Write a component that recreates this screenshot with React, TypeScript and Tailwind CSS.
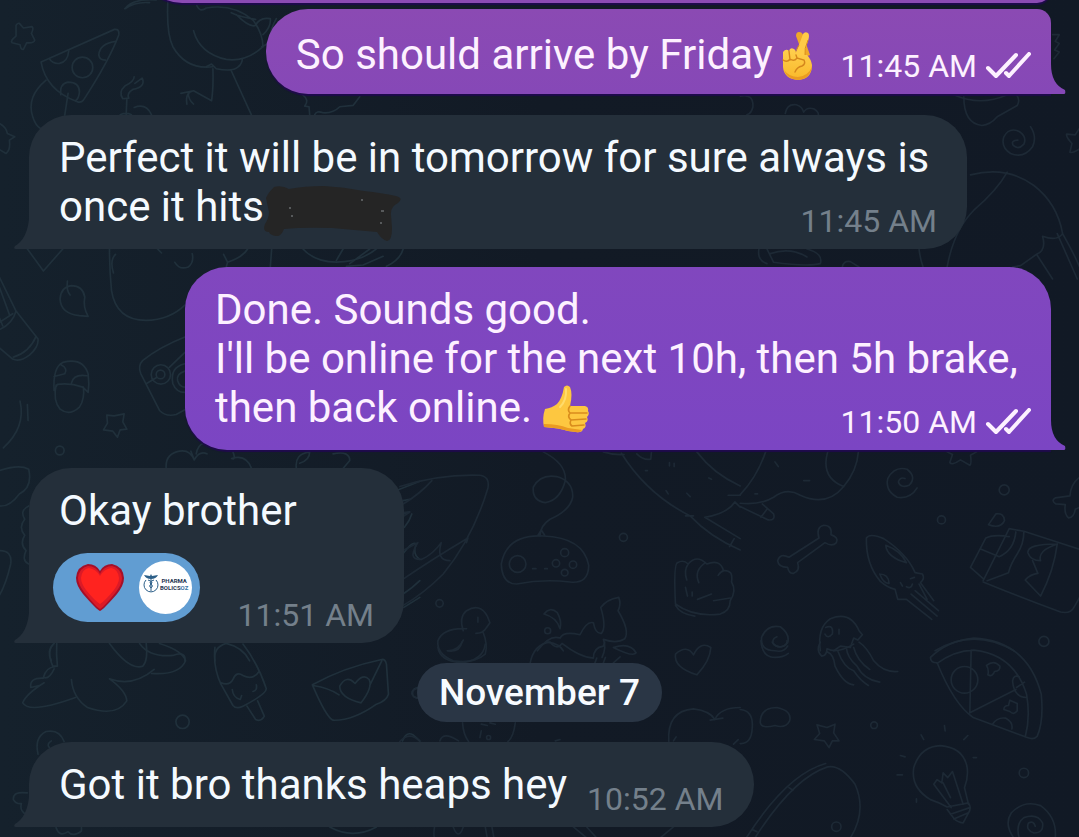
import type { ReactNode } from 'react';
import clsx from 'clsx';

/* ── Wallpaper doodles, drawn at 3x and scaled down ── */
const doodles: { x: number; y: number; soft?: boolean; d: string[] }[] = [
  {
    x: 0,
    y: 0,
    d: [
      // star
      'M60 70 L72 84 L98 80 Q104 84 96 100 L106 120 Q104 130 82 128 L72 148 Q64 150 62 134 L38 128 Q32 122 50 108 L50 76 Q54 68 60 70Z',
      // pizza
      'M125 186 L345 88 Q360 86 358 104 Q330 180 252 300 Q244 310 232 304 Q140 270 125 186Z',
      'M150 176 Q160 192 180 190 Q205 186 208 152 M350 124 Q300 130 298 165 Q300 180 318 180 M218 202a31 31 0 1 0 62 0a31 31 0 1 0 -62 0',
      'M184 284 Q180 250 206 246 Q240 246 240 276 Q238 296 228 302 M140 240 Q80 290 100 350 Q108 376 124 386 M206 280 L196 345',
      // ostrich
      'M376 26 Q400 -5 470 0 M376 26 Q410 4 450 8 M505 0 Q500 100 520 140 Q560 210 640 200 M582 92 Q600 160 680 178 Q740 186 790 140',
      'M590 12 Q600 40 620 24 Q700 10 760 60 Q790 100 790 140 M695 38 Q720 50 768 58 M710 44 Q750 84 768 76 Q780 50 812 56 Q815 80 790 104 M830 56 Q810 90 812 120 Q812 130 786 140',
      'M620 200 L636 192 L650 206 Q700 216 716 200 Q728 190 728 176 M640 206 Q642 260 636 302 L582 272 M582 272 L544 280 M582 272 Q556 276 562 312 M566 276 Q566 300 582 312 M695 212 L756 346',
      // flame
      'M404 230 Q404 244 376 258 Q356 276 370 296 L388 294 Q380 280 400 268 Q440 260 428 234 L406 250 M382 298 L380 344 M362 344 Q380 336 396 344 M404 322 Q440 308 456 344',
      'M0 370 Q20 380 24 400 L46 410 L30 420 Q34 450 20 460 L0 448',
      'M910 285 Q930 300 915 318 L928 320 L930 344 M945 344 Q950 330 970 338 Q1000 340 1020 320 L1060 316 L1080 290',
    ],
  },
  {
    x: 740,
    y: 0,
    soft: true,
    d: [
      'M0 288 Q40 280 38 320 Q34 340 20 344 M135 340 Q140 310 168 314 Q186 320 190 336 Q200 320 220 326 Q236 336 234 344',
      'M640 284 Q720 320 800 284 M670 290 Q670 370 724 376 Q750 374 770 350 L830 316 Q840 300 828 284',
      // spiral
      'M870 380 Q890 410 876 440 Q850 476 810 460 Q780 440 790 410 Q806 380 836 394 Q860 410 850 432 Q834 450 818 436 Q810 420 832 420',
      'M1017 384 L1004 404 L978 402 Q976 410 994 430 L988 456 Q996 460 1017 446',
      'M936 104 L956 104 L944 124 L956 130 L942 150 L956 156 L940 176',
      // umbrella
      'M690 524 Q800 496 880 556 Q950 610 966 700 M800 516 Q770 570 700 630 Q640 690 620 800 M536 748 Q540 780 548 800 M906 708 Q950 724 966 700 Q1000 760 1017 800 M906 708 Q918 750 888 762 L840 796 L816 800 M888 762 L936 836 M950 700 L1010 836',
      'M56 746 Q50 780 80 790 M80 746 L100 786 Q200 800 240 790 Q250 760 200 746 M90 760 Q150 740 200 770 M306 800 Q310 780 330 784 L356 800',
    ],
  },
  {
    x: 0,
    y: 240,
    d: [
      'M84 26 L132 92 L190 26 M330 26 Q330 90 336 150 Q350 240 440 240 Q510 238 556 194 M348 42 Q330 60 342 98 M526 66 Q540 90 566 80 Q584 66 578 40 M474 26 L486 38 M672 42 L684 66 L680 80 M684 66 Q730 50 744 26 M816 26 L812 80 M910 26 Q960 80 1060 60 M1030 26 L1010 60',
      'M1060 60 Q1100 50 1130 26 M1040 78 L1090 74 L1150 48 M1110 26 L1050 70 M1160 78 Q1200 60 1210 26',
      // leaf
      'M204 122 Q200 150 212 164 M216 136 Q184 140 182 176 Q184 220 240 226 L266 228 Q250 200 256 170 Q250 136 216 136Z',
      // pencil
      'M0 110 L50 212 L116 296 Q118 320 90 344 Q60 366 40 356 L0 322 M50 212 Q40 250 0 268 M40 220 L0 246 M0 140 L30 222 M110 288 Q90 336 42 350 M0 232 L10 256',
      // acorn
      'M164 450 Q160 380 190 366 Q250 350 266 400 Q270 430 266 456 M164 450 L174 432 Q210 426 250 440 L266 456 M170 434 Q160 480 182 506 Q210 528 240 500 Q256 476 252 440 M186 374 Q206 384 196 400 L164 408 M216 428 Q222 400 262 406',
      // star
      'M322 524 L344 526 L374 520 L370 544 L382 566 L362 568 L354 590 L340 572 L312 568 L324 548Z',
      // camera
      'M556 290 Q480 320 430 360 Q414 376 424 400 L480 510 Q500 530 530 522 L556 508 M455 402a29 29 0 1 0 58 0a29 29 0 1 0 -58 0 M470 402a13 13 0 1 0 26 0a13 13 0 1 0 -26 0 M556 370 Q510 380 520 430 Q530 456 556 456 M556 392 Q530 400 534 420 Q540 440 556 440 M440 430 L470 412 M510 380 L556 336',
      'M62 482 Q80 560 12 622 M84 492 L86 540 M168 630a13 13 0 1 0 26 0a13 13 0 1 0 -26 0',
      // apple
      'M500 684 Q496 640 540 632 Q570 626 584 658 M574 632 L584 658 Q600 630 622 640 M590 640 Q594 614 612 608 M700 634 Q710 660 696 654 Q740 640 756 684 M890 684 Q884 640 930 634 Q930 660 900 668 M1000 640 Q1050 630 1050 660 L1030 684',
      'M0 690 Q60 670 88 686 Q100 740 60 760 Q30 800 0 796',
    ],
  },
  {
    x: 0,
    y: 460,
    d: [
      'M88 136 Q60 150 76 176 Q56 200 76 224 Q60 250 80 270 Q66 300 88 310 M0 270 Q40 270 34 310 Q20 370 0 404',
      'M1190 90 L1260 62 M1210 120 L1230 116 M1212 160 L1228 154 M1214 200 Q1230 180 1236 160 M1212 276 Q1240 240 1250 250 Q1236 280 1260 296 M1210 400 Q1240 380 1260 360 M1212 440 L1260 410',
      'M164 548 Q140 570 156 600 M420 548 Q450 590 520 584 Q560 570 556 600 M646 600 Q640 560 680 548 Q730 560 750 600',
    ],
  },
  {
    x: 400,
    y: 450,
    soft: true,
    d: [
      // guitar head
      'M0 108 Q120 70 240 74 Q270 78 264 112 Q220 260 130 370 Q70 430 10 464 M10 160 Q60 130 96 90 M10 186 L30 184 L12 196 M12 298 L54 276 Q20 330 66 326 Q100 310 124 276 Q108 330 150 330 M12 384 Q90 330 204 262 L200 276',
      // gamepad
      'M430 4 Q500 40 496 90 Q480 150 436 156 Q396 150 400 110 Q420 70 470 78 Q520 92 518 140 Q510 180 450 206 Q420 226 420 256 M414 254 L424 238 L434 254',
      'M430 256 Q320 250 304 340 Q306 400 350 400 Q430 384 510 394 Q566 400 566 344 Q550 260 430 256Z M328 340a25 25 0 1 0 50 0a25 25 0 1 0 -50 0',
      'M482 306a12 12 0 1 0 24 0a12 12 0 1 0 -24 0 M457 338a11 11 0 1 0 22 0a11 11 0 1 0 -22 0 M508 342a11 11 0 1 0 22 0a11 11 0 1 0 -22 0 M484 366a10 10 0 1 0 20 0a10 10 0 1 0 -20 0 M398 354h10 M434 354h8',
      'M658 260a12 12 0 1 0 24 0a12 12 0 1 0 -24 0 M108 458a11 11 0 1 0 22 0a11 11 0 1 0 -22 0',
      // duck
      'M190 540 Q176 500 200 480 Q240 456 262 496 L270 516 L260 530 Q250 548 228 548 M250 546 Q264 580 256 610 Q220 640 160 630 Q110 610 114 570 Q130 530 200 534 M190 568 Q176 600 144 600 M234 500v14',
      // splash
      'M432 490 Q450 466 472 486 Q486 510 480 534 Q470 500 432 490Z M434 540a9 9 0 1 0 18 0a9 9 0 1 0 -18 0 M412 600 Q450 550 480 562 Q490 540 540 552 Q560 510 580 516 Q586 550 604 548 Q620 530 602 470 Q620 446 656 440 Q664 460 654 480 Q690 540 674 564 Q650 580 610 566 Q620 590 606 620 M444 574 Q480 580 490 600',
      // muffin
      'M826 460 Q820 340 832 336 Q850 326 864 340 Q890 310 920 340 Q960 324 970 360 Q1000 356 994 394 Q1010 420 990 450 Q990 480 960 490 Q880 500 826 460Z M864 340 Q850 360 860 388 M916 336 Q880 360 896 396 M954 374 Q970 350 990 366 M856 410 L862 436 M876 424v12 M892 446 L934 430 M940 450 L990 442 M826 464 Q840 490 884 496',
      // whale
      'M664 8 Q740 130 870 196 Q930 260 1020 298 M610 4 Q640 14 672 12 M710 10 Q730 30 752 26 L754 4 M890 4 Q940 70 1020 106 M914 200 Q980 190 1004 154 L1020 170 M914 200 L1020 264 M984 134h36 M856 196h24 M1002 264 L988 288 M736 60h6 M808 36v10 M822 38v10 M926 82l8 4 M860 128l10 10 M798 120l6 10',
    ],
  },
  {
    x: 740,
    y: 450,
    soft: true,
    d: [
      'M76 4 Q50 80 0 132 M0 158 Q60 164 100 140 Q140 110 180 134 Q260 170 310 108 Q350 60 354 4 M262 4 Q240 80 310 108 M0 168 L84 208 Q106 210 100 190 L66 160 M62 200 L80 176 M104 34 L114 48 M190 90h18 M44 130h8',
      // spiral
      'M530 112 Q510 146 470 140 Q434 120 442 84 Q462 46 500 56 Q530 80 506 104 Q480 114 474 94 Q478 78 494 84',
      'M620 4 L636 12 L628 36 Q634 46 660 28 L688 44 Q694 40 690 14 L708 4',
      'M776 118a15 15 0 1 0 30 0a15 15 0 1 0 -30 0 M591 208a12 12 0 1 0 24 0a12 12 0 1 0 -24 0',
      'M1017 80 Q990 100 988 136 L944 142 Q930 150 946 160 L974 162 Q970 190 984 202 Q1000 200 1004 176 L1017 170',
      // bone
      'M236 262 Q226 230 250 224 Q276 224 272 252 Q296 260 288 276 Q276 290 254 276 L172 336 Q180 360 160 368 Q146 370 142 350 Q114 350 112 330 Q120 306 146 320Z',
      // rocket
      'M378 262 Q388 246 430 264 Q500 310 524 366 L546 370 Q554 384 540 396 L580 450 M378 262 Q376 340 420 392 Q440 410 464 416 L472 446 L498 446 L574 506 M436 284 Q440 320 498 336 Q480 300 436 284 M418 370 Q444 370 446 398 Q430 400 418 370 M512 430 L590 496 M524 420 L594 480 M536 400 L560 446 M480 396 l6 10 M510 384 l12 -4 M498 408 q14 8 18 -8',
      // snack bag
      'M690 350 L736 262 Q760 250 806 258 M690 350 L728 384 M722 296 L776 318 M728 390 L806 234 L850 242 L1017 296 M728 394 Q840 440 960 484 Q990 490 1000 470 L1017 440 M740 390 L804 366 Q810 340 830 310 Q850 280 850 242 M776 318 Q820 300 826 244 M744 222 L766 190 Q790 186 792 210 Q780 236 744 222 M950 280 Q860 280 862 306 Q870 330 900 330 Q890 300 950 280 Q940 360 900 436 L854 388 Q870 370 892 368 L876 330',
      // spiral
      'M142 586 Q130 606 104 600 Q60 600 64 560 Q80 520 120 528 Q150 550 142 576 Q120 600 98 578 Q96 562 110 558',
      // jellyfish
      'M240 600 Q230 530 270 504 Q330 480 356 540 L366 552 L352 568 L340 562 L330 590 L300 586 L280 600 M256 530 Q280 520 276 550 Q262 566 254 550 M296 536v14',
      'M584 600 Q700 530 820 600 M895 572a15 15 0 1 0 30 0a15 15 0 1 0 -30 0',
    ],
  },
  {
    x: 0,
    y: 640,
    d: [
      // frog
      'M164 8 Q140 30 160 76 L174 76 Q170 40 172 8 M166 78 Q140 80 132 110 Q150 116 164 84 M132 112 Q90 110 94 140 L120 134 M134 126 Q80 160 70 186 Q90 220 228 170 M216 116 Q220 170 264 200 Q350 230 382 180 Q380 150 330 114 Q400 140 464 86 M456 98 Q540 104 558 60 Q550 30 480 8 M330 8 Q390 90 430 76 Q446 60 440 8',
      'M529 243a20 20 0 1 0 40 0a20 20 0 1 0 -40 0',
      // popsicle
      'M646 20 Q640 80 664 130 L700 194 Q710 206 730 196 Q800 160 800 144 Q776 70 730 10 M664 126 Q690 136 700 116 Q710 90 730 104 Q760 120 778 92 M742 196 L768 236 Q784 244 794 226 L774 180 M698 146 Q700 170 722 176 L726 164 M770 132 Q774 148 760 152',
      // envelope
      'M938 132 Q1030 80 1146 56 Q1156 54 1160 70 L1166 160 Q1160 180 1130 190 Q1060 240 1000 238 Q980 230 938 132Z M940 134 Q990 142 1018 162 M1146 60 L1110 134 M1066 128 Q1040 100 1020 136 Q1020 170 1084 186 Q1120 140 1108 116 Q1090 96 1066 128Z',
      'M1260 140 Q1236 140 1238 160 Q1240 172 1260 172 M1208 300 Q1220 270 1240 282 L1260 300',
      'M116 340 Q104 290 140 272 Q180 264 194 302 M156 300 Q140 310 150 320',
      'M84 456 Q40 450 42 476 Q50 490 66 488 Q60 510 80 520 M170 560 Q180 590 206 572 Q220 590 246 570 L246 560 M990 558 Q1060 596 1130 558',
    ],
  },
  {
    x: 400,
    y: 640,
    soft: true,
    d: [
      'M114 20 Q120 60 180 66 Q250 60 256 10 M142 30 Q180 36 186 4 M390 70 Q400 10 450 4 Q470 30 486 8 Q540 50 580 52 M580 52 Q580 20 610 16 L614 4 M640 20 Q690 4 708 36 Q700 50 640 20',
      'M584 68 L590 52 M610 66 L616 50 M640 66 L660 48 M58 142 Q36 144 36 158 Q40 172 58 172',
      // heart
      'M880 42 Q860 10 826 40 Q820 80 890 102 Q930 60 932 20 Q900 0 880 42Z',
      'M188 246 Q190 280 206 302 M346 246 Q340 290 324 302 M244 250 L262 254 M270 246 L286 250 M244 270 L240 290 M260 290a6 6 0 1 0 12 0a6 6 0 1 0 -12 0 M0 302 Q30 270 60 302 M120 300 Q130 270 176 300 M466 300 L480 296',
      // cloud
      'M806 302 Q800 210 880 204 Q930 210 944 236 Q960 200 1020 200 M930 238 L968 232 M820 300 L828 288 M1000 310 L1014 296',
      'M104 558 Q100 580 104 591 M160 558 Q176 600 190 558 M256 558 L262 591 M276 558 L282 591 M520 558 L560 591 M560 558 L590 591 M780 591 L820 558',
    ],
  },
  {
    x: 740,
    y: 640,
    soft: true,
    d: [
      'M62 0 Q66 50 104 50 Q130 50 144 38 M96 4 Q104 20 124 18 Q142 14 140 0 M240 4 Q226 30 244 46 Q260 44 260 24 Q290 40 340 10 M262 34 Q280 40 284 76 Q310 130 340 132 M292 30 Q310 80 340 90 Q360 120 384 134 M318 20 Q320 50 350 76 Q370 116 418 124 M340 20 Q350 60 388 86 M356 4 Q380 20 400 60 Q430 96 472 92',
      // pizza slice
      'M570 50 Q620 0 700 -8 Q860 0 902 160 Q910 240 890 286 Q880 298 860 290 L698 230 Q640 190 590 66 Q570 66 570 50Z M590 68 Q640 30 700 28 Q820 40 858 160 Q870 230 854 288 M692 28 L688 216 L826 146 M632 117a40 40 0 1 0 80 0a40 40 0 1 0 -80 0 M816 120 Q820 100 836 108 M816 120 Q820 170 858 170 M828 140 L852 124 M756 250 Q770 228 796 232 Q818 244 814 264 M738 74 Q760 56 778 76 Q780 90 762 92 Q756 110 742 102 Q746 88 738 74Z M808 178 L830 188 L830 210 Q820 224 808 212 L790 206 Q790 194 804 194Z',
      'M0 206 Q40 210 36 260 Q34 310 0 308 M60 246 Q60 200 110 200 Q156 210 148 240 Q136 264 104 254 Q64 264 60 246Z',
      // star
      'M230 252 L260 260 L284 250 L280 276 L296 300 L276 300 L266 320 L252 300 L222 296 L238 278Z M391 253a10 10 0 1 0 20 0a10 10 0 1 0 -20 0 M836 396a14 14 0 1 0 28 0a14 14 0 1 0 -28 0 M274 557a14 14 0 1 0 28 0a14 14 0 1 0 -28 0',
      // surfboard
      'M18 591 Q140 400 256 368 M44 591 Q160 410 262 378 Q300 370 344 430 Q380 510 330 591 M146 440 L158 448 M36 566 L50 572',
      // bulb
      'M620 498 Q600 486 570 476 Q510 440 520 380 Q540 316 600 314 Q670 320 680 380 Q684 410 672 440 L684 490 M620 498 L684 486 Q694 500 684 516 L668 546 Q650 544 640 532 L620 506 M630 520 L688 500 M640 534 L682 516 M632 500 L580 430 L590 416 L604 426 L608 396 L622 410 L636 392 L668 490 M608 426 L630 470 M480 344 L494 348 M470 402h16 M542 282 L550 296 M612 254 L614 270 M670 296 L682 284 M698 350h10 M528 474v10',
      // spiral
      'M820 591 Q790 550 812 516 Q850 476 900 494 Q950 530 944 591 M836 591 Q824 550 850 530 Q890 516 906 546 Q910 576 880 576 Q854 566 864 546 Q880 538 884 556',
    ],
  },
];

function Wallpaper() {
  return (
    <svg
      aria-hidden="true"
      viewBox="0 0 1079 837"
      preserveAspectRatio="xMidYMid slice"
      className="absolute inset-0 h-full w-full"
      fill="none"
      strokeWidth="5"
      strokeLinecap="round"
      strokeLinejoin="round"
    >
      {doodles.map((g, i) => (
        <g key={i} transform={`translate(${g.x} ${g.y}) scale(0.3333)`} className={g.soft ? 'stroke-[#1d2935]' : 'stroke-[#20303b]'}>
          {g.d.map((d) => (
            <path key={d} d={d} />
          ))}
        </g>
      ))}
    </svg>
  );
}

/* ── Emoji ── */
function CrossedFingers() {
  return (
    <svg role="img" aria-label="Crossed fingers" viewBox="0 -4 32 54" className="ml-2 inline-block h-[54px] w-8 align-[-12px]">
      <defs>
        <linearGradient id="hand" x1="0" y1="0" x2="0" y2="1">
          <stop offset="0" stopColor="#ffd04f" />
          <stop offset="1" stopColor="#f9b82a" />
        </linearGradient>
      </defs>
      {/* back finger leans right to left, front one crosses over it */}
      <path d="M15 5 Q15 1 18 1 Q21 1 22 4 L29 24 L21 27 L18 13Z" fill="#f0a828" />
      <path d="M22 3 Q24 0 27 2 Q29 4 27 10 Q24 17 24 27 L12 26 Q16 20 18 14Z" fill="#ffcb47" />
      <path d="M18 14 Q15 20 12 25 M27 9 Q23 17 24 26" stroke="#d98c1c" strokeWidth="1" fill="none" />
      <path d="M2 21 Q5 17 8 20 Q9 16 13 18 Q15 19 15 24 L26 24 Q30 28 31 34 Q31 48 17 49 Q3 48 2 36Z" fill="url(#hand)" />
      <path d="M8 20 L9 29 M2 29 Q6 32 9 28 Q13 31 16 27 L23 29 Q25 33 21 35 Q16 36 14 41 M15 24 L16 27" stroke="#d4861c" strokeWidth="1.4" fill="none" strokeLinecap="round" />
      <path d="M3 39 Q6 48 17 49 Q29 48 31 36 Q27 45 17 46 Q8 46 3 39Z" fill="#eb9b22" />
    </svg>
  );
}

function ThumbsUp() {
  return (
    <svg role="img" aria-label="Thumbs up" viewBox="0 0 48 50" className="inline-block h-[50px] w-12 align-[-12px]">
      <path d="M22 3 Q25 0 28 3 Q31 10 28 22 L43 22 Q47 23 46 27 Q48 30 45 33 Q47 37 43 39 Q45 43 41 45 Q40 49 34 48 L26 47 Q18 44 2 43 Q0 34 3 25 Q10 24 15 20 Q20 15 22 3Z" fill="#fdc740" />
      <path d="M2 40 Q16 40 26 44 L40 46 Q38 49 34 48 L26 47 Q18 44 2 43Z" fill="#eb9b22" />
      <path d="M28 22 Q25 26 28 29 L45 29 M28 29 Q25 33 29 36 L44 35 M29 36 Q27 40 30 42 L42 41" stroke="#d98c1c" strokeWidth="1.6" fill="none" strokeLinecap="round" />
      <path d="M24 5 Q25 16 18 23" stroke="#ffdb6b" strokeWidth="2" fill="none" strokeLinecap="round" />
    </svg>
  );
}

function Heart() {
  return (
    <svg role="img" aria-label="Red heart" viewBox="0 0 50 50" className="h-[50px] w-[50px]">
      <path d="M25 48 Q22 47 8 31 Q1 22 1 15 Q2 3 13 1 Q21 1 25 8 Q29 1 37 1 Q48 3 49 15 Q49 22 42 31 Q28 47 25 48Z" fill="#a50f28" />
      <path d="M25 46 Q22 45 9 29 Q3 21 3 15 Q4 5 13 3 Q21 3 25 11 Q29 3 37 3 Q46 5 47 15 Q47 21 41 29 Q28 45 25 46Z" fill="#dc1a26" />
      <path d="M25 41 Q20 38 11 27 Q6 20 6 15 Q7 6 14 5 Q21 6 25 13 Q29 6 36 5 Q43 6 44 15 Q44 20 39 27 Q30 38 25 41Z" fill="#ff231f" />
    </svg>
  );
}

function Ticks() {
  return (
    <svg
      role="img"
      aria-label="Read"
      viewBox="0 0 46 28"
      className="ml-2 h-7 w-[46px]"
      fill="none"
      stroke="currentColor"
      strokeWidth="4"
      strokeLinecap="round"
      strokeLinejoin="round"
    >
      <path d="M3 16 L11 24 L31 3" />
      <path d="M21 21 L24 24 L44 2" />
    </svg>
  );
}

/* Brushed-over name */
function Redaction() {
  return (
    <svg role="img" aria-label="Hidden name" viewBox="0 0 138 56" className="inline-block h-14 w-[138px] align-[-20px]">
      <path
        d="M2 13 Q4 8 10 2 Q18 0 25 4 Q40 1 60 1 Q80 2 100 6 Q118 8 132 11 Q140 13 134 18 Q126 22 127 30 L128 43 Q128 56 123 56 Q118 55 113 47 Q90 45 68 43 Q40 42 20 44 Q17 52 12 51 Q6 50 5 47 Q-2 47 1 39 Q5 33 5 27Z"
        fill="#252525"
      />
      <path d="M25 23h2 M27 31h2 M97 15h2 M117 26h3 M116 38h2" stroke="#8a8f92" strokeWidth="1" />
    </svg>
  );
}

function Avatar() {
  return (
    <div className="flex size-[53px] items-center gap-px rounded-full bg-white pb-2 pl-1">
      <svg aria-hidden="true" viewBox="0 0 16 20" className="h-5 w-4 shrink-0" fill="none" stroke="#2c5f88">
        <path d="M3 6 A7 7 0 1 0 13 6" strokeWidth="1" />
        <path d="M1 1 L7 2 L8 0 L9 2 L15 1 Q13 5 8 5 Q3 5 1 1Z" fill="#2c5f88" stroke="none" />
        <path d="M8 4v13 M5 6 Q11 8 8 10 Q5 12 8 14 M11 6 Q5 8 8 10 Q11 12 8 14" strokeWidth="1" />
      </svg>
      <div className="flex flex-col text-[6px] leading-[7px] font-bold text-[#1f3550]">
        <span>PHARMA</span>
        <span>
          BOLICS<span className="text-[#3b76a6]">OZ</span>
        </span>
      </div>
    </div>
  );
}

/* ── Bubbles ── */
function Bubble({ out, className, children }: { out?: boolean; className?: string; children: ReactNode }) {
  return (
    <article
      className={clsx(
        'relative max-w-full py-[18px] pl-[30px] text-[42px] leading-[49px]',
        out
          ? 'mr-7 self-end rounded-l-[42px] pr-5 text-[#fdf1ff] shadow-[0_2px_1px_#1f0a4c]'
          : 'ml-[29px] self-start rounded-t-[42px] rounded-br-[42px] bg-[#242f3a] pr-[30px] text-[#f4faff]',
        className,
      )}
    >
      {children}
      {out ? (
        <svg aria-hidden="true" viewBox="0 0 15 30" className="absolute bottom-0 left-full h-[30px] w-[15px]">
          <path d="M0 0 Q0 20 14 26 Q15 30 13 30 H0Z" className="fill-[var(--tail)]" />
        </svg>
      ) : (
        <svg aria-hidden="true" viewBox="0 0 15 30" className="absolute right-full bottom-0 h-[30px] w-[15px]">
          <path d="M15 0 Q13 20 1 27 Q-1 30 2 30 H15Z" fill="#242f3a" />
        </svg>
      )}
    </article>
  );
}

function Stamp({ time, read }: { time: string; read?: boolean }) {
  return (
    <span className={clsx('-mb-2 flex shrink-0 items-center text-[32px] leading-9', !read && 'text-[#74808b]')}>
      <time>{time}</time>
      {read && <Ticks />}
    </span>
  );
}

export default function App() {
  return (
    <main className="relative min-h-screen overflow-hidden bg-linear-to-r from-[#15212c] via-[#121a25] to-[#111925] font-[Roboto,sans-serif]">
      <Wallpaper />
      <div className="relative flex flex-col pb-[11px]">
        {/* tail end of the message above */}
        <div className="-mt-[39px] mr-7 ml-[140px] h-[42px] rounded-br-[14px] rounded-bl-[42px] bg-[#8b4bb3] shadow-[0_2px_1px_#1f0a4c]" />

        <Bubble out className="mt-[6px] rounded-tr-[14px] bg-linear-to-b from-[#8b4ab3] to-[#8648b7] [--tail:#8648b7]">
          <div className="flex h-[49px] items-end justify-between gap-7">
            <p className="h-[49px]">
              So should arrive by Friday
              <CrossedFingers />
            </p>
            <Stamp time="11:45 AM" read />
          </div>
        </Bubble>

        <Bubble className="mt-[21px] w-[938px]">
          <p>Perfect it will be in tomorrow for sure always is</p>
          <div className="flex h-[49px] items-end justify-between">
            <p className="h-[49px]">
              once it hits
              <Redaction />
            </p>
            <Stamp time="11:45 AM" />
          </div>
        </Bubble>

        <Bubble out className="mt-[18px] w-[866px] rounded-tr-[42px] bg-linear-to-b from-[#8147be] to-[#7b45c3] [--tail:#7b45c3]">
          <p>Done. Sounds good.</p>
          <p>I'll be online for the next 10h, then 5h brake,</p>
          <div className="flex h-[49px] items-end justify-between">
            <p className="h-[49px]">
              then back online. <ThumbsUp />
            </p>
            <Stamp time="11:50 AM" read />
          </div>
        </Bubble>

        <Bubble className="mt-[18px] w-[375px]">
          <p>Okay brother</p>
          <div className="mt-[18px] flex items-end justify-between">
            <button
              type="button"
              aria-label="Heart reaction"
              className="mb-[3px] -ml-[6px] flex h-[69px] w-[147px] shrink-0 items-center justify-between rounded-full bg-[#619dd2] pr-2 pl-[22px]"
            >
              <Heart />
              <Avatar />
            </button>
            <Stamp time="11:51 AM" />
          </div>
        </Bubble>

        <div className="mt-5 self-center rounded-full bg-[#2a3645] px-[22px] text-[37px] leading-[59px] font-medium text-[#f7fbff]">November 7</div>

        <Bubble className="mt-5">
          <div className="flex items-end gap-5">
            <p>Got it bro thanks heaps hey</p>
            <Stamp time="10:52 AM" />
          </div>
        </Bubble>
      </div>
    </main>
  );
}
